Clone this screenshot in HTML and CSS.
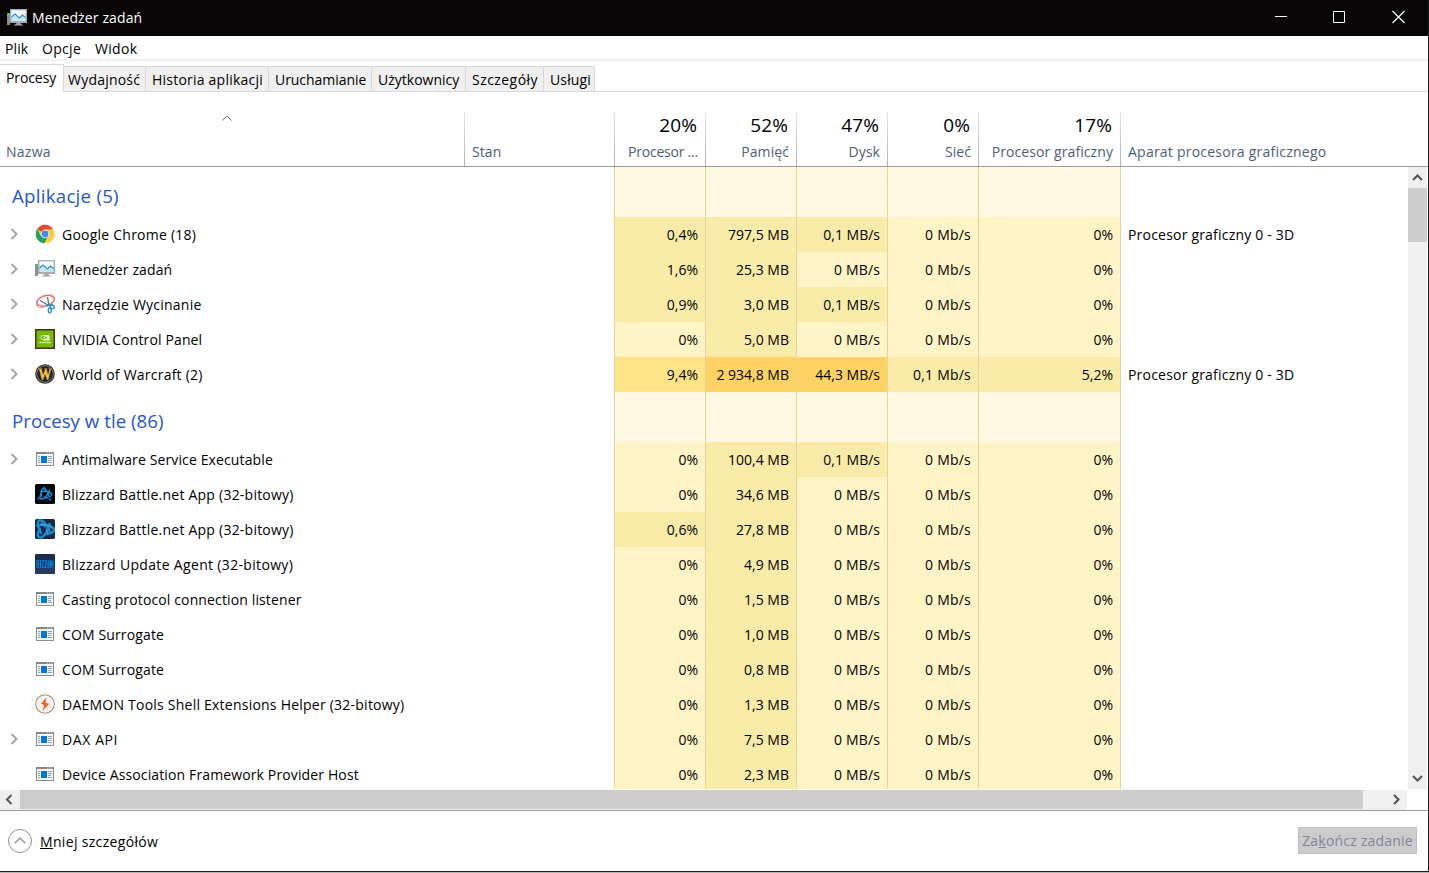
FILE: index.html
```
<!DOCTYPE html>
<html lang="pl">
<head>
<meta charset="utf-8">
<title>Menedżer zadań</title>
<link rel="stylesheet" href="styles.css">
</head>
<body>
<svg class="defs" aria-hidden="true">
  <defs>
    <symbol id="i-task" viewBox="0 0 20 20">
      <rect x="0" y="5" width="3" height="12" fill="#8b9093"/><rect x="1" y="6" width="2" height="2" fill="#39d353"/>
      <rect x="3" y="1" width="17" height="14" fill="#a9adaf"/>
      <rect x="4.500" y="2.500" width="14" height="10.500" fill="#c5e9fb"/>
      <path d="M4.500 8.500 8 6l4.500 4 3-3 3 2.500V2.500h-14z" fill="#f4fbff"/>
      <path d="M4.500 9 8 6l4.500 4 3-3 3 2.500" fill="none" stroke="#2d8fc5" stroke-width="1.200"/>
      <path d="M9.500 15h4v.5l3 2h-10l3-2z" fill="#a5a8aa"/>
    </symbol>
    <symbol id="i-chrome" viewBox="0 0 20 20">
      <circle cx="10" cy="10" r="9.300" fill="#fcc934"/>
      <path d="M10 10 2 5.300A9.300 9.300 0 0 1 18.100 5.500H10z" fill="#dd4b3e"/>
      <path d="M2 5.300A9.300 9.300 0 0 0 9.200 19.300L13.600 12 10 10 6.200 12z" fill="#1da462"/>
      <path d="M18.100 5.500A9.300 9.300 0 0 1 9.200 19.300L13.800 12 10 5.500z" fill="#fdcd40"/>
      <circle cx="10" cy="10" r="4.300" fill="#f4f4f4"/><circle cx="10" cy="10" r="3.400" fill="#4688f4"/>
    </symbol>
    <symbol id="i-snip" viewBox="0 0 20 20">
      <ellipse cx="10.500" cy="6.800" rx="9" ry="5" transform="rotate(-18 10.500 6.800)" fill="#fafafa" stroke="#ee6b6b" stroke-width="1.500"/>
      <path d="M1.300 10c-.5 3 3 4.500 8 3.300" fill="none" stroke="#f19a9a"/>
      <path d="M12.500 3 14 11.500M5 6.500l9.500 5.500" stroke="#697078" stroke-width="1.300"/>
      <g fill="none" stroke="#2d92cf" stroke-width="1.400"><path d="m11 12 7-1.500"/><ellipse cx="17.300" cy="13" rx="2" ry="1.600"/><ellipse cx="14.800" cy="16.300" rx="1.500" ry="2.400"/></g>
    </symbol>
    <symbol id="i-nvidia" viewBox="0 0 20 20">
      <rect width="20" height="20" fill="#43302f"/><rect x="1.500" y="1.500" width="17" height="17" fill="#75b900"/>
      <path d="M8.500 6h6v5.500h-6z" fill="#e9f5d2"/>
      <path d="M5 8.500C7 5.700 10.500 6 12.500 8.700 10.500 11.500 7 11.200 5 8.500z" fill="#75b900" stroke="#f1f9e2" stroke-width=".9"/><circle cx="9.300" cy="8.600" r="1" fill="#e8f5d4"/>
      <path d="M4.500 13.500h11" stroke="#e3f2c8" stroke-width="1.500" stroke-dasharray="1.500 .4"/>
    </symbol>
    <symbol id="i-wow" viewBox="0 0 20 20">
      <circle cx="10" cy="10" r="9.800" fill="#302d2a"/><circle cx="10" cy="10" r="8.300" fill="#16263d" stroke="#77705f" stroke-width="1.200"/>
      <path d="M3 4.500h4.300l-.7 1 1.500 5L10 6l-.7-1.500h3l-.6 1 1.400 5 1.300-5-.9-1H17l-1.200 1.400-2.500 10h-1.200L10 10.500 8.100 15.900H6.800L4.300 5.900z" fill="#f0be48" stroke="#8a5a14" stroke-width=".4"/>
    </symbol>
    <symbol id="i-app" viewBox="0 0 20 20">
      <rect x="1.500" y="3.500" width="17" height="13" fill="#f5f5f5" stroke="#8b8f94"/>
      <path d="M1 4h18" stroke="#83878c" stroke-width="2"/><path d="M12 4h1m1 0h1m1 0h1" stroke="#dfe1e2"/>
      <path d="M3 7.500h2m-2 2h2m-2 2h2m-2 2h2M13 7.500h4m-4 2h4m-4 2h3m-3 2h4" stroke="#9b9fa3"/>
      <rect x="6" y="7" width="6" height="7" fill="#0078d7"/>
    </symbol>
    <symbol id="i-bnet" viewBox="0 0 20 20">
      <g fill="none" stroke="#1594e0" stroke-width="1.300" stroke-linecap="round">
        <path d="M6.500 12C5.500 8 6.500 4.500 8.500 4.300c2 0 4.500 4 5.500 7.500"/>
        <path d="M6 7.500c4-.8 10 .5 10.700 2.800.4 1.700-2.500 3-6.200 3.700"/>
        <path d="M14.500 6.500c-1.500 4-5 8.500-7.700 8.500-2.300 0-2.300-2.500-.8-5.500"/>
        <path d="m8.500 3 2 3M14 15l2 1M4 14l-1 1"/>
      </g>
    </symbol>
    <symbol id="i-bnet-dark" viewBox="0 0 20 20">
      <rect width="20" height="20" rx="1.500" fill="#03070d"/><use href="#i-bnet" width="20" height="20"/>
    </symbol>
    <symbol id="i-bnet-blue" viewBox="0 0 20 20">
      <rect width="20" height="20" rx="1.500" fill="#182a4b"/>
      <g fill="none" stroke="#1a8fce" stroke-width="2.300" stroke-linecap="round">
        <path d="M6 14C2 7 2 1 5.500 1.200 9 2 14 8 15 14"/><path d="M2 6.500c6-2 16 .5 17 4 .5 2.500-4 4.500-9.500 5"/><path d="M14.500 5c-1 6-5.500 13.500-9 13.500S2 14 5 10"/>
      </g>
      <path d="M5 5.500c5-.5 10 1 13 4.500M6 3c3 3 5 6 7 11" fill="none" stroke="#5fc0ea" stroke-width=".6"/>
    </symbol>
    <symbol id="i-blizz" viewBox="0 0 20 20">
      <rect width="20" height="20" rx="1" fill="#1c2c50"/><rect y="14" width="20" height="6" fill="#263a62"/>
      <rect x="1" y="6" width="18" height="8" fill="#0a4277"/>
      <path d="M1.700 6.500v7h2v-7zm0 3.500h2M5.500 6v8M7 6.500h1.700l-1.700 7h2M9.700 6.500h2l-1.800 7h2M13 14V7h1v7m0-3.500h-1M15.500 14V7h1v6.500M18 6.500v7" fill="none" stroke="#1389dc" stroke-width=".8"/>
    </symbol>
    <symbol id="i-daemon" viewBox="0 0 20 20">
      <circle cx="10" cy="10" r="9.200" fill="#e9f1f5" stroke="#b98c78" stroke-width="1.200"/><circle cx="10" cy="10" r="8" fill="none" stroke="#fff"/>
      <path d="M11.500 3.500 5.800 9.800l3.400 1.200L7.500 17l6.700-7.300-3.700-1z" fill="#f4631e"/>
    </symbol>
    <symbol id="i-chev" viewBox="0 0 10 12"><path d="m1.500 1 5 5-5 5" fill="none" stroke="#a6a6a6" stroke-width="2"/></symbol>
  </defs>
</svg>

<div class="window">
  <header class="titlebar">
    <svg class="title-icon"><use href="#i-task"/></svg>
    <span class="title">Menedżer zadań</span>
    <div class="controls">
      <svg viewBox="0 0 58 36"><path d="M10 16.500h12" stroke="#fff"/></svg>
      <svg viewBox="0 0 58 36"><path d="M10.500 11.500h11v11h-11z" fill="none" stroke="#fff"/></svg>
      <svg class="close" viewBox="0 0 47 36"><path d="m11.500 11 12 12m0-12-12 12" stroke="#fff" stroke-width="1.200"/></svg>
    </div>
  </header>

  <nav class="menu"><span class="m1">Plik</span><span class="m2">Opcje</span><span class="m3">Widok</span></nav>

  <div class="tabs">
    <div class="tab active">Procesy</div>
    <div class="tab w82">Wydajność</div>
    <div class="tab w123">Historia aplikacji</div>
    <div class="tab w103">Uruchamianie</div>
    <div class="tab w94">Użytkownicy</div>
    <div class="tab w78">Szczegóły</div>
    <div class="tab last">Usługi</div>
  </div>

  <div class="grid head">
    <div class="h name"><svg class="sort" viewBox="0 0 10 6"><path d="M.5 5.500 5 1l4.500 4.500" fill="none" stroke="#6d6d6d"/></svg><span>Nazwa</span></div>
    <div class="h left"><span>Stan</span></div>
    <div class="h num"><b>20%</b><span class="tight">Procesor ...</span></div>
    <div class="h num"><b>52%</b><span>Pamięć</span></div>
    <div class="h num"><b>47%</b><span>Dysk</span></div>
    <div class="h num"><b>0%</b><span>Sieć</span></div>
    <div class="h num"><b>17%</b><span>Procesor graficzny</span></div>
    <div class="h left"><span class="wide">Aparat procesora graficznego</span></div>
  </div>

  <div class="body">
    <div class="rows">
      <div class="grid group"><div class="gname apps">Aplikacje (5)</div><i></i><i class="c"></i><i class="c"></i><i class="c"></i><i class="c"></i><i class="c"></i><i class="g"></i></div>
      <div class="grid row"><div class="n"><svg class="chev"><use href="#i-chev"/></svg><svg class="ic"><use href="#i-chrome"/></svg><span class="wide">Google Chrome (18)</span></div><i></i><div class="c m">0,4%</div><div class="c m">797,5 MB</div><div class="c m">0,1 MB/s</div><div class="c net">0 Mb/s</div><div class="c">0%</div><div class="g">Procesor graficzny 0 - 3D</div></div>
      <div class="grid row"><div class="n"><svg class="chev"><use href="#i-chev"/></svg><svg class="ic"><use href="#i-task"/></svg><span>Menedżer zadań</span></div><i></i><div class="c m">1,6%</div><div class="c m">25,3 MB</div><div class="c disk">0 MB/s</div><div class="c net">0 Mb/s</div><div class="c">0%</div><div class="g"></div></div>
      <div class="grid row"><div class="n"><svg class="chev"><use href="#i-chev"/></svg><svg class="ic"><use href="#i-snip"/></svg><span class="wide">Narzędzie Wycinanie</span></div><i></i><div class="c m">0,9%</div><div class="c m">3,0 MB</div><div class="c m">0,1 MB/s</div><div class="c net">0 Mb/s</div><div class="c">0%</div><div class="g"></div></div>
      <div class="grid row"><div class="n"><svg class="chev"><use href="#i-chev"/></svg><svg class="ic"><use href="#i-nvidia"/></svg><span>NVIDIA Control Panel</span></div><i></i><div class="c">0%</div><div class="c m">5,0 MB</div><div class="c disk">0 MB/s</div><div class="c net">0 Mb/s</div><div class="c">0%</div><div class="g"></div></div>
      <div class="grid row"><div class="n"><svg class="chev"><use href="#i-chev"/></svg><svg class="ic"><use href="#i-wow"/></svg><span class="wide">World of Warcraft (2)</span></div><i></i><div class="c h1">9,4%</div><div class="c h2">2 934,8 MB</div><div class="c h2">44,3 MB/s</div><div class="c m net">0,1 Mb/s</div><div class="c m">5,2%</div><div class="g">Procesor graficzny 0 - 3D</div></div>
      <div class="grid group"><div class="gname">Procesy w tle (86)</div><i></i><i class="c"></i><i class="c"></i><i class="c"></i><i class="c"></i><i class="c"></i><i class="g"></i></div>
      <div class="grid row"><div class="n"><svg class="chev"><use href="#i-chev"/></svg><svg class="ic"><use href="#i-app"/></svg><span>Antimalware Service Executable</span></div><i></i><div class="c">0%</div><div class="c m">100,4 MB</div><div class="c m">0,1 MB/s</div><div class="c net">0 Mb/s</div><div class="c">0%</div><div class="g"></div></div>
      <div class="grid row"><div class="n"><svg class="chev"></svg><svg class="ic"><use href="#i-bnet-dark"/></svg><span class="wide">Blizzard Battle.net App (32-bitowy)</span></div><i></i><div class="c">0%</div><div class="c m">34,6 MB</div><div class="c disk">0 MB/s</div><div class="c net">0 Mb/s</div><div class="c">0%</div><div class="g"></div></div>
      <div class="grid row"><div class="n"><svg class="chev"></svg><svg class="ic"><use href="#i-bnet-blue"/></svg><span class="wide">Blizzard Battle.net App (32-bitowy)</span></div><i></i><div class="c m">0,6%</div><div class="c m">27,8 MB</div><div class="c disk">0 MB/s</div><div class="c net">0 Mb/s</div><div class="c">0%</div><div class="g"></div></div>
      <div class="grid row"><div class="n"><svg class="chev"></svg><svg class="ic"><use href="#i-blizz"/></svg><span class="wider">Blizzard Update Agent (32-bitowy)</span></div><i></i><div class="c">0%</div><div class="c m">4,9 MB</div><div class="c disk">0 MB/s</div><div class="c net">0 Mb/s</div><div class="c">0%</div><div class="g"></div></div>
      <div class="grid row"><div class="n"><svg class="chev"></svg><svg class="ic"><use href="#i-app"/></svg><span>Casting protocol connection listener</span></div><i></i><div class="c">0%</div><div class="c m">1,5 MB</div><div class="c disk">0 MB/s</div><div class="c net">0 Mb/s</div><div class="c">0%</div><div class="g"></div></div>
      <div class="grid row"><div class="n"><svg class="chev"></svg><svg class="ic"><use href="#i-app"/></svg><span>COM Surrogate</span></div><i></i><div class="c">0%</div><div class="c m">1,0 MB</div><div class="c disk">0 MB/s</div><div class="c net">0 Mb/s</div><div class="c">0%</div><div class="g"></div></div>
      <div class="grid row"><div class="n"><svg class="chev"></svg><svg class="ic"><use href="#i-app"/></svg><span>COM Surrogate</span></div><i></i><div class="c">0%</div><div class="c m">0,8 MB</div><div class="c disk">0 MB/s</div><div class="c net">0 Mb/s</div><div class="c">0%</div><div class="g"></div></div>
      <div class="grid row"><div class="n"><svg class="chev"></svg><svg class="ic"><use href="#i-daemon"/></svg><span class="wide">DAEMON Tools Shell Extensions Helper (32-bitowy)</span></div><i></i><div class="c">0%</div><div class="c m">1,3 MB</div><div class="c disk">0 MB/s</div><div class="c net">0 Mb/s</div><div class="c">0%</div><div class="g"></div></div>
      <div class="grid row"><div class="n"><svg class="chev"><use href="#i-chev"/></svg><svg class="ic"><use href="#i-app"/></svg><span class="widest">DAX API</span></div><i></i><div class="c">0%</div><div class="c m">7,5 MB</div><div class="c disk">0 MB/s</div><div class="c net">0 Mb/s</div><div class="c">0%</div><div class="g"></div></div>
      <div class="grid row"><div class="n"><svg class="chev"></svg><svg class="ic"><use href="#i-app"/></svg><span>Device Association Framework Provider Host</span></div><i></i><div class="c">0%</div><div class="c m">2,3 MB</div><div class="c disk">0 MB/s</div><div class="c net">0 Mb/s</div><div class="c">0%</div><div class="g"></div></div>
    </div>
    <div class="vbar">
      <svg class="up" viewBox="0 0 19 21"><path d="m5 13 4.500-4.500L14 13" fill="none" stroke="#555" stroke-width="2"/></svg>
      <div class="vthumb"></div>
      <svg class="down" viewBox="0 0 19 21"><path d="M5 8 9.500 12.500 14 8" fill="none" stroke="#555" stroke-width="2"/></svg>
    </div>
  </div>

  <div class="hbar">
    <svg viewBox="0 0 20 19"><path d="M11.500 5 7 9.500l4.500 4.500" fill="none" stroke="#555" stroke-width="2"/></svg>
    <div class="hthumb"></div>
    <svg viewBox="0 0 20 19"><path d="m9 5 4.500 4.500L9 14" fill="none" stroke="#555" stroke-width="2"/></svg>
  </div>

  <footer class="footer">
    <svg class="round" viewBox="0 0 24 24"><circle cx="12" cy="12" r="11.500" fill="#fff" stroke="#919191"/><path d="m6.800 14.200 5.200-5 5.200 5" fill="none" stroke="#a6a6a6" stroke-width="1.800"/></svg>
    <span class="less"><u>M</u>niej szczegółów</span>
    <button class="end" disabled>Za<u>k</u>ończ zadanie</button>
  </footer>
</div>
</body>
</html>
```
FILE: styles.css
```
* { box-sizing: border-box; }
body {
  margin: 0;
  background: #b5b5b0;
  font: 14px/20px "Open Sans", "Noto Sans", sans-serif;
  color: #000;
  overflow: hidden;
}
.defs { position: absolute; width: 0; height: 0; }
svg { display: block; flex: none; }
.window {
  width: 1429px;
  height: 872px;
  display: flex;
  flex-direction: column;
  background: #fff;
  border-right: 1px solid #1c1c1c;
  border-bottom: 1px solid #1c1c1c;
  white-space: nowrap;
}

.titlebar {
  height: 36px;
  flex: none;
  display: flex;
  align-items: center;
  background: #070506;
  color: #fff;
  padding-left: 7px;
  letter-spacing: .13px;
}
.title-icon { width: 20px; height: 20px; margin-right: 5px; }
.controls { display: flex; margin-left: auto; }
.controls svg { width: 58px; height: 36px; }
.controls .close { width: 47px; }

.menu {
  height: 25px;
  flex: none;
  display: flex;
  padding: 3px 0 0 5px;
  border-bottom: 2px solid #f0f0f0;
  letter-spacing: .3px;
}
.m1 { width: 37px; letter-spacing: .1px; }
.m2 { width: 53px; }

.tabs {
  height: 31px;
  flex: none;
  display: flex;
  align-items: flex-end;
  background: linear-gradient(#d9d9d9, #d9d9d9) 0 100% / 100% 1px no-repeat;
}
.tab {
  height: 26px;
  border: 1px solid #d9d9d9;
  border-left: 0;
  background: #f0f0f0;
  padding: 3px 0 0 6px;
}
.tab.active {
  width: 64px;
  height: 28px;
  background: #fff;
  border-bottom: 0;
  letter-spacing: -.1px;
}
.w82 { width: 82px; padding-left: 4px; letter-spacing: .22px; }
.w123 { width: 123px; letter-spacing: .22px; }
.w103 { width: 103px; letter-spacing: -.05px; }
.w94 { width: 94px; }
.w78 { width: 78px; letter-spacing: .45px; }
.last { width: 51px; letter-spacing: .15px; }

.grid {
  display: grid;
  grid-template-columns: 464px 150px 91px 91px 91px 91px 142px 1fr;
}
.head {
  height: 75px;
  flex: none;
  padding-top: 20px;
  border-bottom: 1px solid #9c9c9c;
  color: #4c607a;
}
.h {
  display: flex;
  flex-direction: column;
  justify-content: flex-end;
  padding: 0 7px 4px;
  border-left: 1px solid;
  border-image: linear-gradient(#e6e6e6, #b0b0b0) 1;
  letter-spacing: .08px;
}
.h.name { border: 0; padding-left: 6px; justify-content: space-between; letter-spacing: .25px; }
.sort { width: 10px; height: 6px; margin: 3px 0 0 216px; }
.num { align-items: flex-end; }
.num b {
  font-size: 19px;
  font-weight: 400;
  line-height: 24px;
  color: #000;
  margin: 0 1px 5px 0;
}
.num .tight { letter-spacing: -.22px; }

.body { height: 622px; flex: none; display: flex; }
.rows { width: 1408px; height: 622px; overflow: hidden; }
.group { height: 50px; }
.row { height: 35px; line-height: 35px; }
.gname {
  font-size: 18.7px;
  line-height: 58px;
  padding-left: 12px;
  color: #2456c7;
  letter-spacing: .02px;
}
.apps { letter-spacing: .25px; }
.n { display: flex; align-items: center; padding-left: 10px; letter-spacing: .13px; }
.chev { width: 10px; height: 12px; margin: -2px 15px 0 0; }
.ic { width: 20px; height: 20px; margin: 0 7px 1px 0; }
.wide { letter-spacing: .23px; }
.wider { letter-spacing: .33px; }
.widest { letter-spacing: .6px; }
.c {
  background: #fff4c5;
  border-left: 1px solid #e9d39e;
  padding-right: 7px;
  text-align: right;
}
.disk { letter-spacing: .15px; }
.net { letter-spacing: .22px; }
.group .c { background: #fff8e3; }
.c.m { background: #f9eca8; }
.c.h1 { background: #ffe387; }
.c.h2 { background: #ffd264; }
.g { border-left: 1px solid #e9d39e; padding-left: 7px; letter-spacing: .2px; }

.vbar { width: 19px; background: #f0f0f0; display: flex; flex-direction: column; }
.vbar svg { width: 19px; height: 21px; }
.vthumb { height: 54px; background: #cdcdcd; }
.vbar .down { margin-top: auto; }

.hbar {
  width: 1407px;
  height: 20px;
  flex: none;
  margin-top: 1px;
  display: flex;
  background: #f0f0f0;
}
.hbar svg { width: 20px; height: 19px; }
.hthumb { width: 1343px; height: 19px; background: #cdcdcd; margin-right: 22px; }

.footer {
  flex: 1;
  display: flex;
  align-items: center;
  border-top: 1px solid #9c9c9c;
  padding: 0 11px 0 8px;
}
.round { width: 24px; height: 24px; margin-right: 8px; }
.less { margin-top: 2px; letter-spacing: .33px; }
.end {
  width: 119px;
  height: 27px;
  margin: 0 0 1px auto;
  padding: 0;
  border: 1px solid #bfbfbf;
  background: #ccc;
  font: inherit;
  letter-spacing: .2px;
  color: #838799;
}
```
